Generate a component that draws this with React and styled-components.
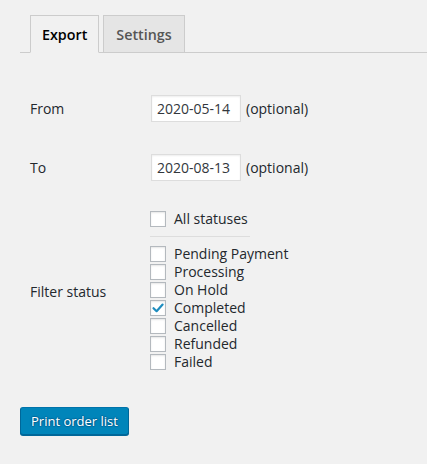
import React from "react";
import styled, { createGlobalStyle } from "styled-components";

const Global = createGlobalStyle`
  html, body { margin: 0; padding: 0; background: #f1f1f1; }
  body { font-family: "Open Sans", "Noto Sans", sans-serif; color: #23282d; font-size: 14px; }
  * { box-sizing: border-box; }
`;

const Page = styled.div`
  padding: 15px 0 30px 20px;
`;

const TabBar = styled.div`
  display: flex;
  gap: 4px;
  padding-left: 10px;
  border-bottom: 1px solid #ccc;
`;

const Tab = styled.div`
  height: 38px;
  margin-bottom: -1px;
  padding: 0 ${(p) => (p.$active ? 11 : 12)}px;
  display: flex;
  align-items: center;
  font-size: 14.3px;
  font-weight: 600;
  border: 1px solid #ccc;
  border-bottom-color: ${(p) => (p.$active ? "#f1f1f1" : "#ccc")};
  background: ${(p) => (p.$active ? "#f1f1f1" : "#e5e5e5")};
  color: ${(p) => (p.$active ? "#000" : "#555")};
`;

const Form = styled.div`
  display: flex;
  flex-direction: column;
  padding-top: 42px;
`;

const Row = styled.div`
  display: grid;
  grid-template-columns: 130px 1fr;
  align-items: center;
  margin-bottom: ${(p) => p.$mb || 0}px;
`;

const Label = styled.div`
  padding-left: 10px;
  font-size: 14px;
  color: #23282d;
`;

const Field = styled.div`
  display: flex;
  align-items: center;
  gap: 5px;
`;

const DateInput = styled.input`
  width: 90px;
  height: 27px;
  margin-left: 1px;
  padding: 0 5px;
  border: 1px solid #ddd;
  box-shadow: inset 0 1px 2px rgba(0, 0, 0, 0.07);
  background: #fff;
  font-family: inherit;
  font-size: 14px;
  color: #32373c;
  outline: none;
`;

const Hint = styled.span`
  font-size: 14px;
  color: #23282d;
`;

const Checks = styled.div`
  display: flex;
  flex-direction: column;
  gap: 2px;
  margin-top: -1px;
`;

const CheckRow = styled.label`
  display: flex;
  align-items: center;
  gap: 8px;
  height: 16px;
  font-size: 14px;
  line-height: 16px;
  color: #23282d;
`;

const Box = styled.span`
  width: 16px;
  height: 16px;
  flex: none;
  display: flex;
  align-items: center;
  justify-content: center;
  background: #fff;
  border: 1px solid #b4b9be;
  box-shadow: inset 0 1px 2px rgba(0, 0, 0, 0.1);
`;

const Separator = styled.div`
  width: 100px;
  height: 1px;
  background: #ddd;
  margin: 7px 0;
`;

const Button = styled.button`
  align-self: flex-start;
  margin-top: 37px;
  height: 28px;
  padding: 0 10px;
  border-radius: 3px;
  border: 1px solid #0073aa;
  border-color: #0073aa #006799 #006799;
  background: #0085ba;
  box-shadow: 0 1px 0 #006799;
  color: #fff;
  font-family: inherit;
  font-size: 13px;
  text-shadow: 0 -1px 1px #006799, 1px 0 1px #006799, 0 1px 1px #006799, -1px 0 1px #006799;
`;

const Check = () => (
  <svg width="14" height="14" viewBox="0 0 14 14">
    <path d="M2.5 7.2 L5.6 10.2 L11.6 3.6" fill="none" stroke="#1e8cbe" strokeWidth="2.2" strokeLinecap="round" strokeLinejoin="round" />
  </svg>
);

const CheckItem = ({ label, checked }) => (
  <CheckRow>
    <Box>{checked && <Check />}</Box>
    {label}
  </CheckRow>
);

const statuses = [
  ["Pending Payment", false],
  ["Processing", false],
  ["On Hold", false],
  ["Completed", true],
  ["Cancelled", false],
  ["Refunded", false],
  ["Failed", false],
];

export default function App() {
  return (
    <>
      <Global />
      <Page>
        <TabBar>
          <Tab $active>Export</Tab>
          <Tab>Settings</Tab>
        </TabBar>
        <Form>
          <Row $mb={32}>
            <Label>From</Label>
            <Field>
              <DateInput defaultValue="2020-05-14" />
              <Hint>(optional)</Hint>
            </Field>
          </Row>
          <Row $mb={31}>
            <Label>To</Label>
            <Field>
              <DateInput defaultValue="2020-08-13" />
              <Hint>(optional)</Hint>
            </Field>
          </Row>
          <Row>
            <Label>Filter status</Label>
            <Checks>
              <CheckItem label="All statuses" />
              <Separator />
              {statuses.map(([l, c]) => (
                <CheckItem key={l} label={l} checked={c} />
              ))}
            </Checks>
          </Row>
          <Button>Print order list</Button>
        </Form>
      </Page>
    </>
  );
}
